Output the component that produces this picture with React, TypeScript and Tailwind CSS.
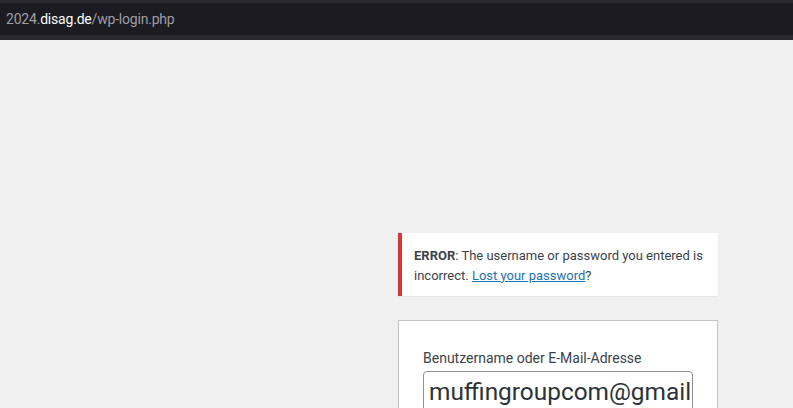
import React from "react";

export default function App() {
  return (
    <div className="w-[793px] h-[408px] overflow-hidden bg-[#f0f0f1] flex flex-col" style={{ fontFamily: 'Roboto, "Open Sans", sans-serif' }}>
      <div className="h-[40px] shrink-0 bg-[#2b2a33] flex flex-col">
        <div className="h-[3px] bg-[#2b2a33]" />
        <div className="h-[32px] bg-[#1c1b22] flex items-center pl-[6px] text-[14px] leading-none tracking-[-0.2px]">
          <span className="text-[#9e9ea3]">2024.</span>
          <span className="text-[#fbfbfe]">disag.de</span>
          <span className="text-[#9e9ea3]">/wp-login.php</span>
        </div>
        <div className="h-[5px] bg-[#2b2a33]" />
      </div>
      <div className="flex-1 flex flex-col items-start pl-[398px] pt-[193px]">
        <div className="w-[320px] bg-white border-l-4 border-[#d63638] shadow-[0_1px_1px_rgba(0,0,0,0.04)] px-[12px] pt-[13px] pb-[11px] text-[13px] leading-[19.5px] text-[#3c434a]">
          <strong className="font-bold">ERROR</strong>: The username or password you entered is incorrect.{" "}
          <a className="text-[#2271b1] underline">Lost your password</a>?
        </div>
        <div className="mt-[24px] w-[320px] bg-white border border-[#c3c4c7] px-[24px] pt-[28px] pb-[40px]">
          <div className="text-[14px] leading-[19.5px] text-[#3c434a] mb-[2px]">Benutzername oder E-Mail-Adresse</div>
          <div className="w-[270px] h-[42px] border border-[#8c8f94] rounded-[4px] overflow-hidden whitespace-nowrap px-[5px] text-[24.4px] leading-[40px] text-[#2c3338]">
            muffingroupcom@gmail.com
          </div>
        </div>
      </div>
    </div>
  );
}
